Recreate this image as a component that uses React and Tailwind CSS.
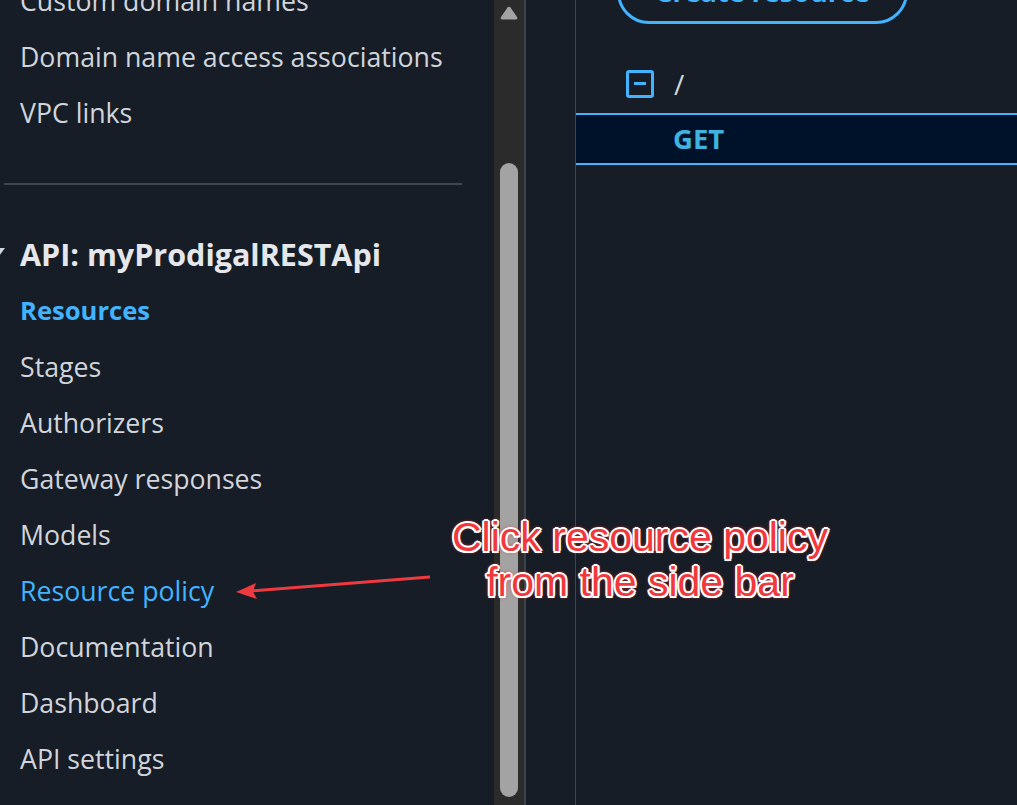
import React from "react";

const font = { fontFamily: '"Open Sans", "Noto Sans", sans-serif' };

function NavItem({ children, active, link }) {
  return (
    <div
      className={`h-[56px] flex items-center pl-[20px] whitespace-nowrap ${
        active
          ? "text-[#42b4ff] font-bold text-[25.6px]"
          : link
          ? "text-[#42b4ff] text-[26.7px]"
          : "text-[#d1d5db] text-[26.7px]"
      }`}
    >
      {children}
    </div>
  );
}

export default function App() {
  return (
    <div
      className="relative w-[1017px] h-[805px] overflow-hidden bg-[#161d26] flex"
      style={font}
    >
      {/* Sidebar */}
      <div className="w-[494px] shrink-0 overflow-hidden">
        <div className="-mt-[27px]">
          <NavItem>Custom domain names</NavItem>
          <NavItem>Domain name access associations</NavItem>
          <NavItem>VPC links</NavItem>
          <div className="mt-[42px] mb-[42px] ml-[4px] w-[458px] h-[2px] bg-[#414750]" />
          <div className="relative h-[56px] flex items-center pl-[20px] text-[30.5px] font-bold text-[#e5e7eb] whitespace-nowrap">
            <svg className="absolute left-[-8px] top-[20px]" width="14" height="10" viewBox="0 0 14 10">
              <path d="M1 1 L13 1 L7 9 Z" fill="#d1d5db" />
            </svg>
            API: myProdigalRESTApi
          </div>
          <NavItem active>Resources</NavItem>
          <NavItem>Stages</NavItem>
          <NavItem>Authorizers</NavItem>
          <NavItem>Gateway responses</NavItem>
          <NavItem>Models</NavItem>
          <NavItem link>Resource policy</NavItem>
          <NavItem>Documentation</NavItem>
          <NavItem>Dashboard</NavItem>
          <NavItem>API settings</NavItem>
        </div>
      </div>

      {/* Scrollbar */}
      <div className="w-[30px] shrink-0 bg-[#2b2b2b] flex flex-col items-center">
        <svg className="mt-[6px]" width="18" height="14" viewBox="0 0 18 14">
          <path d="M7.5 1.5 Q9 0 10.5 1.5 L17 11 Q18 13.5 15.5 13.5 L2.5 13.5 Q0 13.5 1 11 Z" fill="#a3a3a3" />
        </svg>
        <div className="mt-[143px] w-[18px] h-[634px] rounded-full bg-[#a3a3a3]" />
      </div>

      <div className="w-[2px] shrink-0 bg-[#3d434c]" />
      <div className="w-[49px] shrink-0" />

      {/* Main content */}
      <div className="flex-1 border-l border-[#414750] flex flex-col">
        <div className="-mt-[40px] ml-[41px] w-[291px] h-[64px] rounded-full border-[3px] border-[#42b4ff] flex items-center justify-center text-[27px] font-bold text-[#42b4ff] whitespace-nowrap">
          Create resource
        </div>
        <div className="mt-[46px] ml-[50px] h-[27px] flex items-center gap-[20px]">
          <div className="w-[28px] h-[28px] border-[3px] border-[#42b4ff] rounded-[3px] flex items-center justify-center">
            <div className="w-[12px] h-[3px] bg-[#42b4ff]" />
          </div>
          <span className="text-[28px] text-[#d1d5db] leading-none">/</span>
        </div>
        <div className="mt-[16px] h-[52px] border-y-2 border-[#42b4ff] bg-[#00112a] flex items-center pl-[97px] text-[27.5px] font-bold text-[#3fb3dd]">
          GET
        </div>
      </div>

      {/* Annotation */}
      <div
        className="absolute left-[390px] top-[515px] w-[500px] text-center text-[41px] leading-[45px] text-[#f0383d] [text-shadow:1.5px_1.5px_0_#fff,-1.5px_-1.5px_0_#fff,1.5px_-1.5px_0_#fff,-1.5px_1.5px_0_#fff,2px_0_0_#fff,-2px_0_0_#fff,0_2px_0_#fff,0_-2px_0_#fff,0_0_4px_#e53935,0_0_4px_#e53935]"
        style={{ fontFamily: '"Liberation Sans", Arial, sans-serif' }}
      >
        Click resource policy
        <br />
        from the side bar
      </div>
      <svg className="absolute left-0 top-0 pointer-events-none" width="1017" height="805">
        <line x1="430" y1="577" x2="250" y2="591" stroke="#ee3a3f" strokeWidth="3" />
        <path d="M236 592 L256 583 L253 591.5 L257 599 Z" fill="#ee3a3f" />
      </svg>
    </div>
  );
}
